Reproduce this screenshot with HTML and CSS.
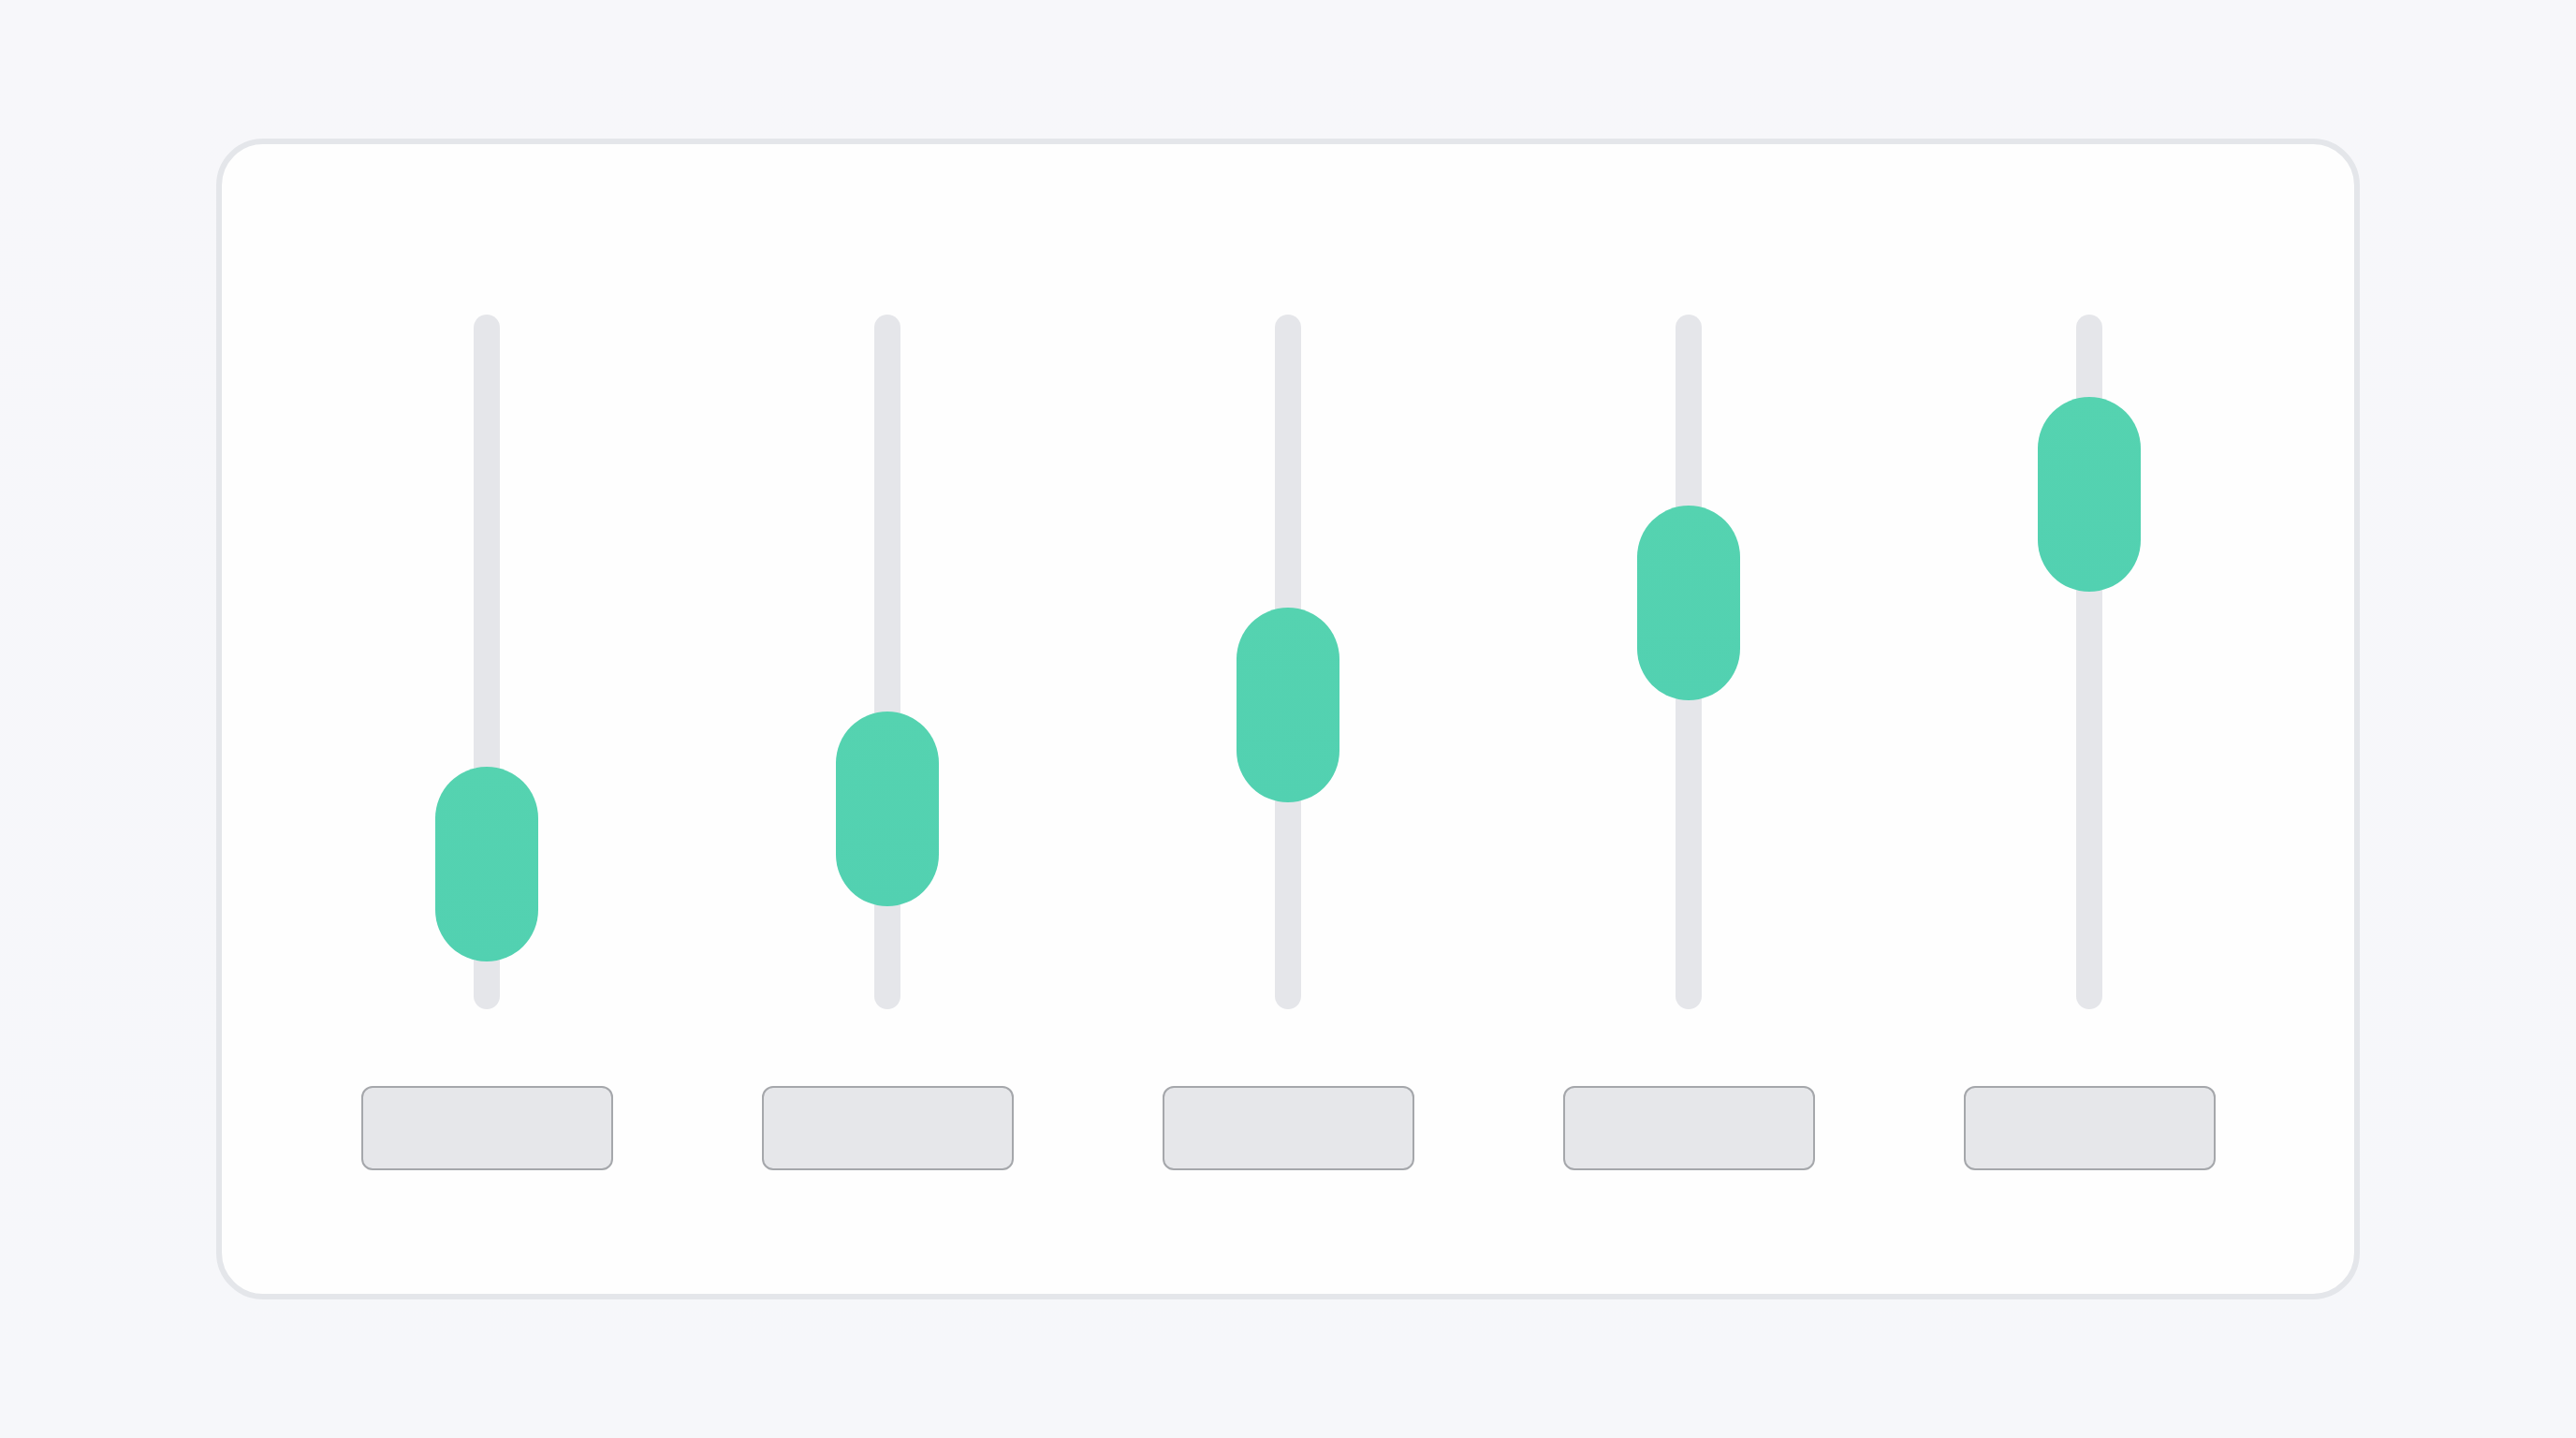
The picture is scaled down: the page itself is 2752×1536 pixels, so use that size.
FILE: index.html
```html
<!DOCTYPE html>
<html lang="en">
<head>
<meta charset="utf-8">
<title>Mixer</title>
<link rel="stylesheet" href="styles.css">
</head>
<body>
  <main class="mixer">
    <div class="channels">
      <div class="channel">
        <div class="track"><div class="thumb" style="top: 483px"></div></div>
        <div class="pad"></div>
      </div>
      <div class="channel">
        <div class="track"><div class="thumb" style="top: 424px"></div></div>
        <div class="pad"></div>
      </div>
      <div class="channel">
        <div class="track"><div class="thumb" style="top: 313px"></div></div>
        <div class="pad"></div>
      </div>
      <div class="channel">
        <div class="track"><div class="thumb" style="top: 204px"></div></div>
        <div class="pad"></div>
      </div>
      <div class="channel">
        <div class="track"><div class="thumb" style="top: 88px"></div></div>
        <div class="pad"></div>
      </div>
    </div>
  </main>
</body>
</html>
```
FILE: styles.css
```css
html, body {
  margin: 0;
  height: 100%;
}

body {
  display: flex;
  align-items: center;
  justify-content: center;
  background: linear-gradient(180deg, #f7f7fa 0%, #f6f7fa 100%);
  font-family: "Liberation Sans", Arial, sans-serif;
}

.mixer {
  box-sizing: border-box;
  width: 2290px;
  height: 1240px;
  background: #fefefe;
  border: 6px solid #e4e6ea;
  border-radius: 50px;
}

.channels {
  display: flex;
  justify-content: center;
  padding-top: 182px;
}

.channel {
  width: 428px;
  display: flex;
  flex-direction: column;
  align-items: center;
}

.track {
  position: relative;
  width: 28px;
  height: 742px;
  border-radius: 14px;
  background: #e5e6ea;
}

.thumb {
  position: absolute;
  left: 50%;
  width: 110px;
  height: 208px;
  margin-left: -55px;
  border-radius: 55px;
  background: linear-gradient(180deg, #55d3b0 0%, #52d1b1 100%);
}

.pad {
  box-sizing: border-box;
  margin-top: 82px;
  width: 269px;
  height: 90px;
  background: #e6e7ea;
  border: 2px solid #a5a7ab;
  border-radius: 12px;
}
```
